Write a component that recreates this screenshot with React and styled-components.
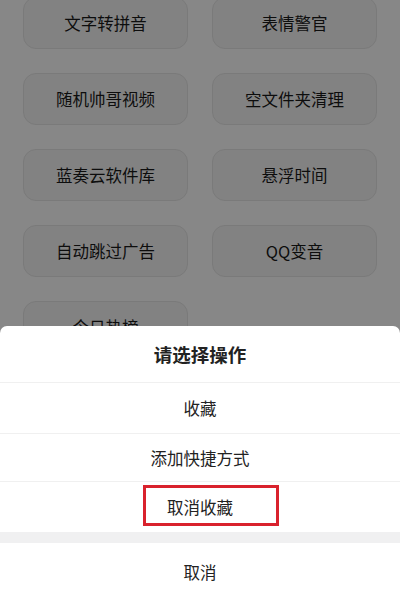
import React from "react";
import styled, { createGlobalStyle } from "styled-components";

const Global = createGlobalStyle`
  html, body { margin: 0; padding: 0; height: 600px; overflow: hidden; }
  body { font-family: "Noto Sans CJK SC", "Noto Sans", sans-serif; background: #ffffff; }
`;

const Page = styled.div`
  width: 400px;
  height: 600px;
  background: #ffffff;
  overflow: hidden;
`;

const Grid = styled.div`
  display: grid;
  grid-template-columns: 165px 165px;
  column-gap: 24px;
  row-gap: 24px;
  grid-auto-rows: 52px;
  padding: 0 23px;
  margin-top: -3px;
`;

const Tool = styled.div`
  box-sizing: border-box;
  border: 1px solid #e6e6e6;
  background: #f6f6f6;
  border-radius: 13px;
  display: flex;
  align-items: center;
  justify-content: center;
  font-size: 16.5px;
  color: #1a1a1a;
`;

const Dim = styled.div`
  position: fixed;
  inset: 0;
  background: rgba(0, 0, 0, 0.47);
`;

const Sheet = styled.div`
  position: fixed;
  left: 0;
  right: 0;
  bottom: 0;
  height: 274px;
  background: #ffffff;
  border-radius: 7px 7px 0 0;
  display: flex;
  flex-direction: column;
`;

const Title = styled.div`
  height: 56px;
  display: flex;
  align-items: center;
  justify-content: center;
  font-size: 18.5px;
  font-weight: 700;
  color: #222;
  border-bottom: 1px solid #f0f0f0;
`;

const Item = styled.div`
  position: relative;
  height: ${(p) => p.$h || 50}px;
  display: flex;
  align-items: center;
  justify-content: center;
  font-size: 16.5px;
  color: #222;
  box-sizing: border-box;
  border-bottom: ${(p) => (p.$last ? "none" : "1px solid #f0f0f0")};
`;

const Band = styled.div`
  height: 11px;
  background: #f0f0f1;
`;

const Mark = styled.div`
  position: absolute;
  left: 143px;
  top: 3px;
  width: 136px;
  height: 41px;
  box-sizing: border-box;
  border: 3px solid #d9222d;
`;

const tools = [
  "文字转拼音",
  "表情警官",
  "随机帅哥视频",
  "空文件夹清理",
  "蓝奏云软件库",
  "悬浮时间",
  "自动跳过广告",
  "QQ变音",
  "今日热榜",
];

export default function App() {
  return (
    <Page>
      <Global />
      <Grid>
        {tools.map((t) => (
          <Tool key={t}>{t}</Tool>
        ))}
      </Grid>
      <Dim />
      <Sheet>
        <Title>请选择操作</Title>
        <Item $h={51}>收藏</Item>
        <Item $h={49}>添加快捷方式</Item>
        <Item $h={50} $last>
          取消收藏
          <Mark />
        </Item>
        <Band />
        <Item $h={57} $last>取消</Item>
      </Sheet>
    </Page>
  );
}
